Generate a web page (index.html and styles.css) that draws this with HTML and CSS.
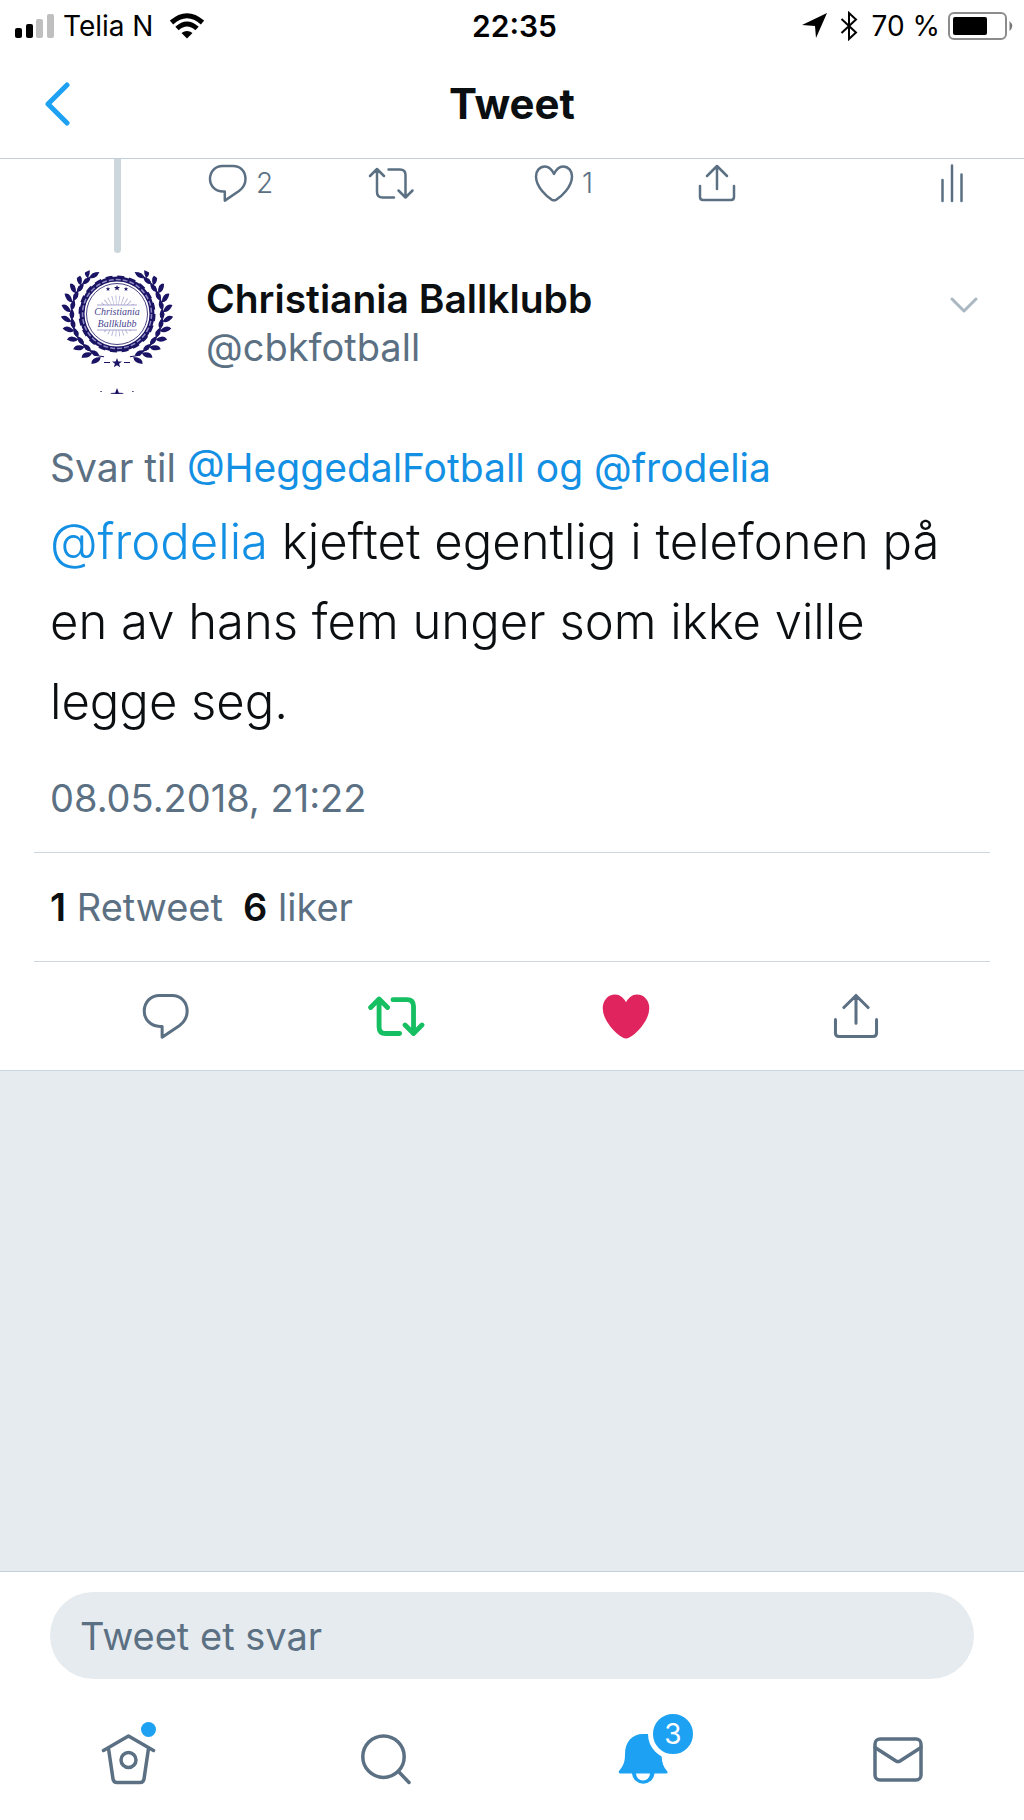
FILE: index.html
```
<!DOCTYPE html>
<html lang="no">
<head>
  <meta charset="UTF-8" />
  <meta name="viewport" content="width=device-width, initial-scale=1.0"/>
  <title>Tweet</title>
  <link rel="stylesheet" href="styles.css">
</head>
<body>

  <!-- shared icons -->
  <svg class="sprite" width="0" height="0" aria-hidden="true">
    <symbol id="i-reply" viewBox="0 0 48 48">
      <path d="M18.500 7H29C36.500 7 41.500 12.500 41.500 20C41.500 25 39 29 35 32L20.800 41.600V32.600H19C11.500 32.600 6 27 6 20C6 12.500 11.500 7 18.500 7Z"/>
    </symbol>
    <symbol id="i-retweet" viewBox="0 0 48 48">
      <path d="M3 17L10 10L17 17M10 10.500V33Q10 38.500 15.500 38.500H27M21.500 10.500H33Q38.500 10.500 38.500 16V38M31.500 31.500L38.500 38.500L45.500 31.500"/>
    </symbol>
    <symbol id="i-heart" viewBox="0 0 48 48">
      <path d="M24 15C21.500 10 18.500 7.500 15 7.500C9.500 7.500 6 12 6 17.500C6 28 17 38 22 40.800Q24 41.800 26 40.800C31 38 42 28 42 17.500C42 12 38.500 7.500 33 7.500C29.500 7.500 26.500 10 24 15Z"/>
    </symbol>
    <symbol id="i-share" viewBox="0 0 48 48">
      <path d="M14 17L24 7L34 17M24 7V30M7 27V38Q7 41 10 41H38Q41 41 41 38V27"/>
    </symbol>
    <symbol id="i-stats" viewBox="0 0 48 48">
      <path d="M14.500 21V42M24 6.500V42M33.500 15.500V42"/>
    </symbol>
  </svg>

  <div class="status-bar">
    <div class="status-left">
      <svg width="40" height="26" viewBox="0 0 40 26">
        <rect x="0" y="15" width="7" height="10" rx="2"/>
        <rect x="11" y="11" width="7" height="14" rx="2"/>
        <rect x="21" y="6" width="7" height="19" rx="2" fill="#bfbfbf"/>
        <rect x="32" y="1" width="7" height="24" rx="2" fill="#bfbfbf"/>
      </svg>
      <span class="carrier">Telia N</span>
      <svg width="36" height="26" viewBox="0 0 36 26">
        <g fill="none" stroke="#000" stroke-width="5">
          <path d="M2.500 9.500Q18-4 33.500 9.500"/>
          <path d="M8 15.500Q18 6.500 28 15.500"/>
        </g>
        <path d="M12.500 20Q18 16 23.500 20L18 25.500Z"/>
      </svg>
    </div>
    <time class="clock">22:35</time>
    <div class="status-right">
      <svg width="26" height="26" viewBox="0 0 26 26"><path d="M25 0L14 25L13 13L0 12Z"/></svg>
      <svg width="18" height="30" viewBox="0 0 18 30"><path d="M1.500 8L16 21.500L9 28V2L16 8.500L1.500 22" fill="none" stroke="#000" stroke-width="2"/></svg>
      <span>70 %</span>
      <svg width="66" height="28" viewBox="0 0 66 28">
        <rect x="1" y="1" width="57" height="26" rx="5" fill="none" stroke="#8c8c8c" stroke-width="2"/>
        <rect x="5" y="5" width="34" height="18" rx="2"/>
        <path d="M61.500 9Q67 14 61.500 19Z" fill="#777"/>
      </svg>
    </div>
  </div>

  <header class="nav">
    <button class="back" aria-label="Tilbake">
      <svg width="26" height="44" viewBox="0 0 26 44"><path d="M22 3L3 22L22 41"/></svg>
    </button>
    <h1>Tweet</h1>
  </header>

  <main>
    <section class="previous">
      <div class="thread-line"></div>
      <div class="small-actions">
        <button aria-label="Svar"><svg class="icon"><use href="#i-reply"/></svg><span>2</span></button>
        <button aria-label="Retweet"><svg class="icon"><use href="#i-retweet"/></svg></button>
        <button aria-label="Lik"><svg class="icon"><use href="#i-heart"/></svg><span>1</span></button>
        <button aria-label="Del"><svg class="icon"><use href="#i-share"/></svg></button>
        <button class="stats-btn" aria-label="Statistikk"><svg class="icon"><use href="#i-stats"/></svg></button>
      </div>
    </section>

    <article class="tweet">
      <div class="author">
        <svg class="avatar" viewBox="-65 -50 130 130">
          <defs>
            <g id="leaf">
              <path d="M-4-45Q3-47 7-47L7-46Q3-46-4-44Z"/>
              <path d="M-1-46Q-3-52 5-56Q8-50-1-46ZM1-45Q5-49.500 12-44Q5-40 1-45Z"/>
            </g>
            <g id="branch">
              <use href="#leaf" transform="rotate(-38)"/>
              <use href="#leaf" transform="rotate(-50)"/>
              <use href="#leaf" transform="rotate(-62)"/>
              <use href="#leaf" transform="rotate(-74)"/>
              <use href="#leaf" transform="rotate(-86)"/>
              <use href="#leaf" transform="rotate(-98)"/>
              <use href="#leaf" transform="rotate(-110)"/>
              <use href="#leaf" transform="rotate(-122)"/>
              <use href="#leaf" transform="rotate(-134)"/>
              <use href="#leaf" transform="rotate(-146)"/>
              <use href="#leaf" transform="rotate(-158)"/>
            </g>
            <path id="star" d="M0-5L1.300-1.600L5-1.500L2.100.700L3.100 4.200L0 2.200L-3.100 4.200L-2.100.700L-5-1.500L-1.300-1.600Z"/>
          </defs>
          <g fill="#1b1464">
            <use href="#branch"/>
            <use href="#branch" transform="scale(-1 1)"/>
            <path d="M-13 48H-7V49H-13ZM7 48H13V49H7Z"/>
            <use href="#star" transform="translate(0 49)"/>
            <use href="#star" transform="translate(0 81) scale(1.400)"/>
            <circle cx="-16" cy="78" r="1"/>
            <circle cx="16" cy="78" r="1"/>
            <use href="#star" transform="translate(0-26) scale(.600)"/>
            <use href="#star" transform="translate(-9-25) scale(.450)"/>
            <use href="#star" transform="translate(9-25) scale(.450)"/>
          </g>
          <g fill="none" stroke="#1b1464">
            <circle r="35" stroke-width="5"/>
            <circle r="37.500" stroke-width="2" stroke-dasharray="7 4.780"/>
            <circle r="34.500" stroke="#8f8bc4" stroke-width="1.500" stroke-dasharray="5 2"/>
            <circle r="30.500" stroke-width=".800"/>
            <circle r="15" cy="2" stroke="#b6b3d4" stroke-width="11" stroke-dasharray=".700 2.300"/>
          </g>
          <path d="M-21-9H21V16H-21Z" fill="#fff"/>
          <path d="M-20-9H20M-20 16H20" stroke="#8f8bc4" stroke-width=".800"/>
          <text class="crest" x="0" y="1">Christiania</text>
          <text class="crest" x="0" y="13">Ballklubb</text>
        </svg>
        <div class="names">
          <strong>Christiania Ballklubb</strong>
          <span>@cbkfotball</span>
        </div>
        <button class="more" aria-label="Mer">
          <svg width="28" height="18" viewBox="0 0 28 18"><path d="M2 3L14 15L26 3"/></svg>
        </button>
      </div>

      <p class="reply-to">Svar til <a href="#">@HeggedalFotball og @frodelia</a></p>
      <p class="tweet-text"><a href="#">@frodelia</a> kjeftet egentlig i telefonen på en av hans fem unger som ikke ville legge seg.</p>
      <time class="date">08.05.2018, 21:22</time>

      <div class="counts">
        <span><b>1</b> Retweet</span>
        <span><b>6</b> liker</span>
      </div>

      <div class="actions">
        <button aria-label="Svar"><svg class="icon"><use href="#i-reply"/></svg></button>
        <button class="retweeted" aria-label="Retweet"><svg class="icon"><use href="#i-retweet"/></svg></button>
        <button class="liked" aria-label="Lik"><svg class="icon"><use href="#i-heart"/></svg></button>
        <button aria-label="Del"><svg class="icon"><use href="#i-share"/></svg></button>
      </div>
    </article>
  </main>

  <footer>
    <form class="composer">
      <input type="text" placeholder="Tweet et svar" aria-label="Tweet et svar">
    </form>
    <nav class="tabs">
      <a href="#" aria-label="Hjem">
        <svg viewBox="0 0 64 64"><path d="M7.500 22.500L32.500 8L57.500 22.500M12.500 20.500L17 51Q17.500 54.500 21 54.500H44Q47.500 54.500 48 51L52.500 20.500"/><circle cx="32.500" cy="32" r="7.500"/></svg>
        <span class="dot"></span>
      </a>
      <a href="#" aria-label="Søk">
        <svg viewBox="0 0 64 64"><circle cx="31.500" cy="28.700" r="20.700"/><path d="M46.500 43.500L57 54.500"/></svg>
      </a>
      <a href="#" aria-label="Varsler">
        <svg class="bell" viewBox="0 0 64 64"><path d="M35 6C24 6 17 14 17 26C17 34 15.500 37.500 11 43Q10 45.500 12.500 45.500H24A11.300 11.300 0 0 0 46.500 45.500H58Q60.500 45.500 59 43C55.500 39 54 35 53.700 29L47 6ZM28 45.500H42A7 7 0 0 1 28 45.500Z"/></svg>
        <span class="badge">3</span>
      </a>
      <a href="#" aria-label="Meldinger">
        <svg viewBox="0 0 64 64"><rect x="11" y="11" width="46" height="41" rx="5"/><path d="M11 19.500L32 33Q34 34.200 36 33L57 19.500"/></svg>
      </a>
    </nav>
  </footer>

</body>
</html>
```
FILE: styles.css
```
* { margin: 0; padding: 0; box-sizing: border-box; }

body {
  font-family: Inter, 'Liberation Sans', sans-serif;
  font-size: 38px;
  color: #0c0f11;
  background: #e6ebef;
  display: flex;
  flex-direction: column;
  min-height: 100vh;
}

a {
  color: #1390e4;
  text-decoration: none;
}

button {
  background: none;
  border: none;
  font: inherit;
  color: inherit;
  cursor: pointer;
}

svg {
  display: block;
  flex: none;
}

.sprite { position: absolute; }

.icon {
  width: 48px;
  height: 48px;
  fill: none;
  stroke: #5b7083;
  stroke-width: 2.5;
  stroke-linecap: round;
  stroke-linejoin: round;
}

/* status bar */
.status-bar {
  display: grid;
  grid-template-columns: 1fr auto 1fr;
  align-items: center;
  height: 52px;
  padding: 0 10px 0 15px;
  background: #fff;
  color: #000;
  font-size: 28px;
}

.status-left, .status-right {
  display: flex;
  align-items: center;
  gap: 8px;
}

.status-right {
  justify-content: flex-end;
}

.carrier { margin-right: 8px; }

.status-right svg:first-child { margin-right: 4px; }
.status-right span { margin-left: 6px; }

.clock {
  font-size: 30px;
  font-weight: 600;
}

/* top nav */
.nav {
  display: grid;
  grid-template-columns: 1fr auto 1fr;
  align-items: center;
  height: 107px;
  padding: 0 45px 3px;
  background: #fff;
  border-bottom: 1px solid #c4d0d9;
}

.nav h1 {
  font-size: 42px;
  font-weight: 700;
}

.back { justify-self: start; }

.back path, .more path {
  fill: none;
  stroke: #1da1f2;
  stroke-width: 5;
  stroke-linecap: round;
  stroke-linejoin: round;
}

.more path {
  stroke: #aab8c2;
  stroke-width: 3;
}

/* end of the tweet above */
.previous {
  display: flex;
  padding: 0 48px 0 114px;
  background: #fff;
}

.thread-line {
  width: 7px;
  height: 94px;
  margin-right: 83px;
  background: #ccd6dd;
  border-radius: 0 0 4px 4px;
}

.small-actions {
  flex: 1;
  display: grid;
  grid-template-columns: repeat(4, 163px) 1fr;
  align-items: start;
  font-size: 28px;
  font-weight: 300;
  color: #5b7083;
}

.small-actions button {
  display: flex;
  align-items: center;
  gap: 4px;
}

.small-actions .stats-btn { justify-self: end; }

/* main tweet */
.tweet {
  background: #fff;
  border-bottom: 1px solid #ccd6dd;
}

.author {
  display: flex;
  align-items: flex-start;
  padding: 11px 46px 0 52px;
}

.avatar {
  width: 130px;
  height: 130px;
  border-radius: 50%;
}

.crest {
  font-family: 'Liberation Serif', serif;
  font-size: 10px;
  font-style: italic;
  fill: #4a4590;
  text-anchor: middle;
}

.names {
  flex: 1;
  display: flex;
  flex-direction: column;
  padding: 11px 0 0 24px;
  line-height: 48px;
}

.names strong {
  font-size: 39px;
  font-weight: 600;
}

.names span {
  color: #5b7083;
}

.more { margin-top: 32px; }

.reply-to {
  padding: 48px 50px 0;
  font-size: 39px;
  line-height: 52px;
  color: #5b7083;
}

.tweet-text {
  padding: 8px 50px 0;
  font-size: 49px;
  font-weight: 300;
  line-height: 80px;
}

.date {
  display: block;
  padding: 32px 50px 30px;
  line-height: 48px;
  color: #5b7083;
}

.counts {
  display: flex;
  gap: 20px;
  margin: 0 34px;
  padding: 30px 16px;
  line-height: 48px;
  color: #5b7083;
  border-top: 1px solid #ccd6dd;
  border-bottom: 1px solid #ccd6dd;
}

.counts b {
  font-weight: 600;
  color: #0c0f11;
}

.actions {
  display: grid;
  grid-template-columns: repeat(4, 1fr);
  justify-items: center;
  padding: 25px 53px 25px 51px;
}

.actions .icon {
  width: 58px;
  height: 58px;
}

.actions .retweeted .icon {
  stroke: #17bf63;
  stroke-width: 4;
}

.actions .liked .icon {
  fill: #e0245e;
  stroke: #e0245e;
}

/* reply box and tabs */
footer {
  margin-top: auto;
  background: #fff;
  border-top: 1px solid #c4d0d9;
}

.composer { padding: 20px 50px 0; }

.composer input {
  display: block;
  width: 100%;
  height: 87px;
  padding: 0 30px;
  border: none;
  border-radius: 44px;
  background: #e6ebef;
  font: inherit;
  color: #0c0f11;
}

.composer input::placeholder {
  color: #5b7083;
  opacity: 1;
}

.tabs {
  display: grid;
  grid-template-columns: repeat(4, 1fr);
  justify-items: center;
  padding: 49px 0 28px;
}

.tabs a { position: relative; }

.tabs svg {
  width: 64px;
  height: 64px;
  fill: none;
  stroke: #5b7083;
  stroke-width: 3.5;
  stroke-linecap: round;
  stroke-linejoin: round;
}

.tabs .bell {
  fill: #1da1f2;
  stroke: none;
}

.dot {
  position: absolute;
  top: -6px;
  right: 4px;
  width: 15px;
  height: 15px;
  border-radius: 50%;
  background: #1da1f2;
}

.badge {
  position: absolute;
  top: -19px;
  right: -26px;
  width: 50px;
  height: 50px;
  border: 5px solid #fff;
  border-radius: 50%;
  background: #1da1f2;
  color: #fff;
  font-size: 28px;
  line-height: 40px;
  text-align: center;
}
```
